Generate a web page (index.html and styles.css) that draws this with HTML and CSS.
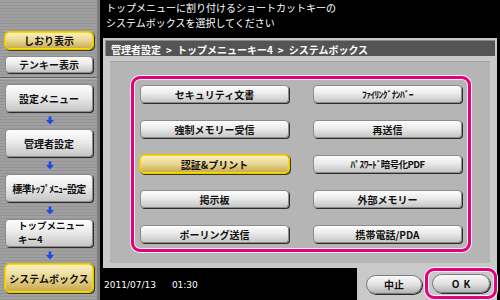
FILE: index.html
```html
<!DOCTYPE html>
<html lang="ja">

<head>
  <meta charset="UTF-8">
  <title>システムボックス</title>
  <link rel="stylesheet" href="styles.css">
</head>

<body>
  <div class="screen">

    <!-- Left navigation column -->
    <aside class="sidebar">
      <div class="side-top">
        <div class="btn side-small active">しおり表示</div>
        <div class="btn side-small">テンキー表示</div>
      </div>

      <div class="side-flow">
        <div class="btn side-step">設定メニュー</div>
        <svg class="arrow" viewBox="0 0 9 9"><path d="M3 0h3v4h3l-4.5 5L0 4h3z" /></svg>
        <div class="btn side-step">管理者設定</div>
        <svg class="arrow" viewBox="0 0 9 9"><path d="M3 0h3v4h3l-4.5 5L0 4h3z" /></svg>
        <div class="btn side-step narrow">標準ﾄｯﾌﾟﾒﾆｭｰ設定</div>
        <svg class="arrow" viewBox="0 0 9 9"><path d="M3 0h3v4h3l-4.5 5L0 4h3z" /></svg>
        <div class="btn side-step two-line">トップメニュー<br>キー4</div>
        <svg class="arrow" viewBox="0 0 9 9"><path d="M3 0h3v4h3l-4.5 5L0 4h3z" /></svg>
        <div class="btn side-step active">システムボックス</div>
      </div>
    </aside>

    <!-- Main area -->
    <main class="main">
      <div class="prompt">トップメニューに割り付けるショートカットキーの<br>システムボックスを選択してください</div>

      <div class="panel">
        <div class="crumbs">管理者設定<span class="sep">&gt;</span>トップメニューキー4<span class="sep">&gt;</span>システムボックス</div>
        <div class="content">
          <div class="choices">
            <div class="btn choice">セキュリティ文書</div>
            <div class="btn choice half">ﾌｧｲﾘﾝｸﾞﾅﾝﾊﾞｰ</div>
            <div class="btn choice">強制メモリー受信</div>
            <div class="btn choice">再送信</div>
            <div class="btn choice active">認証&amp;プリント</div>
            <div class="btn choice half">ﾊﾟｽﾜｰﾄﾞ暗号化PDF</div>
            <div class="btn choice">掲示板</div>
            <div class="btn choice">外部メモリー</div>
            <div class="btn choice">ポーリング送信</div>
            <div class="btn choice">携帯電話/PDA</div>
          </div>
        </div>
      </div>

      <div class="footer">
        <div class="clock">2011/07/13<span class="time">01:30</span></div>
        <div class="actions">
          <div class="pill">中止</div>
          <div class="ring">
            <div class="pill ok">OK</div>
          </div>
        </div>
      </div>
    </main>

  </div>
</body>

</html>
```

FILE: styles.css
```css
/* Page reset and base font */
body {
  margin: 0;
  padding: 0;
  background: #000;
  font-family: "Noto Sans CJK JP", "Noto Sans", sans-serif;
}

.screen {
  display: flex;
  width: 500px;
  height: 300px;
  overflow: hidden;
}

/* Sidebar with the striped grey background */
.sidebar {
  width: 97px;
  flex: none;
  border-right: 3px solid #7c7c7c;
  background: repeating-linear-gradient(to bottom, #a0a0a0 0 2px, #949494 2px 3px);
  display: flex;
  flex-direction: column;
}

.side-top {
  height: 78px;
  box-sizing: border-box;
  padding: 32px 0 0 5px;
  display: flex;
  flex-direction: column;
  gap: 7px;
  border-bottom: 1px solid #5e5e5e;
  box-shadow: 0 1px 0 #b8b8b8;
}

.side-flow {
  padding: 6px 0 0 5px;
  display: flex;
  flex-direction: column;
}

/* Common button look */
.btn {
  box-sizing: border-box;
  display: flex;
  align-items: center;
  justify-content: center;
  background: linear-gradient(#fdfdfd, #ebebeb 45%, #c6c6c6);
  border: 1px solid #8c8c8c;
  border-radius: 4px;
  box-shadow: 1px 1px 0 #2c2c2c;
  color: #111;
  font-size: 10px;
  font-weight: bold;
  white-space: nowrap;
}

.btn.active {
  background: linear-gradient(#f8efc6, #e8d690 50%, #c9ab52);
  border: 1px solid #f6dc00;
  box-shadow: 0 0 0 1px #e6c600, 1px 1px 0 1px #3a3a1a;
}

.side-small {
  width: 88px;
  height: 17px;
}

.side-step {
  width: 88px;
  height: 28px;
}

.narrow {
  letter-spacing: -0.6px;
}

/* Half-width katakana labels are squeezed like the panel font */
.half {
  font-size: 9.5px;
  letter-spacing: -0.6px;
}

.two-line {
  justify-content: flex-start;
  padding-left: 12px;
  font-size: 9.5px;
  line-height: 13.8px;
}

.arrow {
  width: 8px;
  height: 9px;
  margin: 4px 0 4px 41px;
  fill: #1b47ee;
}

/* Main column */
.main {
  flex: 1;
  display: flex;
  flex-direction: column;
  padding-left: 3px;
}

.prompt {
  height: 38px;
  box-sizing: border-box;
  padding: 1px 3px 0;
  color: #fff;
  font-size: 10px;
  line-height: 14.5px;
}

.panel {
  height: 230px;
  box-sizing: border-box;
  margin-right: 3px;
  padding: 2px 2px 5px;
  background: #c9c9c9;
  display: flex;
  flex-direction: column;
}

.crumbs {
  height: 17px;
  box-sizing: border-box;
  padding: 2px 0 0 5px;
  background: #545454;
  border-top: 1px solid #8a8a8a;
  border-left: 1px solid #8a8a8a;
  color: #fff;
  font-size: 10px;
  font-weight: bold;
  line-height: 13px;
  white-space: nowrap;
}

.sep {
  margin: 0 5px;
}

.content {
  flex: 1;
  margin: 5px 5px 0;
  padding: 14px 19px 11px 21px;
  background: #b5b5b5;
  border-top: 1px solid #a4a4a4;
}

/* Pink framed grid of shortcut choices */
.choices {
  box-sizing: border-box;
  height: 176px;
  padding: 6px 5px 6px 6px;
  border: 3px solid #e4007f;
  border-radius: 9px;
  box-shadow: 0 0 0 1px #f4f4f4, inset 0 0 0 1px #f4f4f4;
  display: grid;
  grid-template-columns: 149px 149px;
  grid-auto-rows: 18px;
  column-gap: 24px;
  row-gap: 17px;
}

/* Footer: clock on the left, action buttons on the right */
.footer {
  flex: 1;
  display: flex;
}

.clock {
  flex: 1;
  padding: 12px 0 0 1px;
  color: #fff;
  font-family: "DejaVu Sans", sans-serif;
  font-size: 9px;
}

.time {
  margin-left: 16px;
}

.actions {
  width: 140px;
  margin-right: 3px;
  background: #c9c9c9;
  display: flex;
  align-items: center;
  padding-left: 9px;
  box-sizing: border-box;
  gap: 3px;
}

.pill {
  width: 57px;
  height: 19px;
  box-sizing: border-box;
  display: flex;
  align-items: center;
  justify-content: center;
  border: 1px solid #7a7a7a;
  border-radius: 10px;
  background: linear-gradient(#fafafa, #e2e2e2 50%, #b4b4b4);
  box-shadow: 1px 1px 0 #2c2c2c;
  color: #111;
  font-size: 10px;
  font-weight: bold;
}

.ok {
  width: 58px;
  letter-spacing: 4px;
  padding-left: 4px;
}

.ring {
  padding: 3px 4px;
  margin-top: -1px;
  border: 3px solid #e4007f;
  border-radius: 9px;
  box-shadow: 0 0 0 1px #f4f4f4, inset 0 0 0 1px #f4f4f4;
}
```
